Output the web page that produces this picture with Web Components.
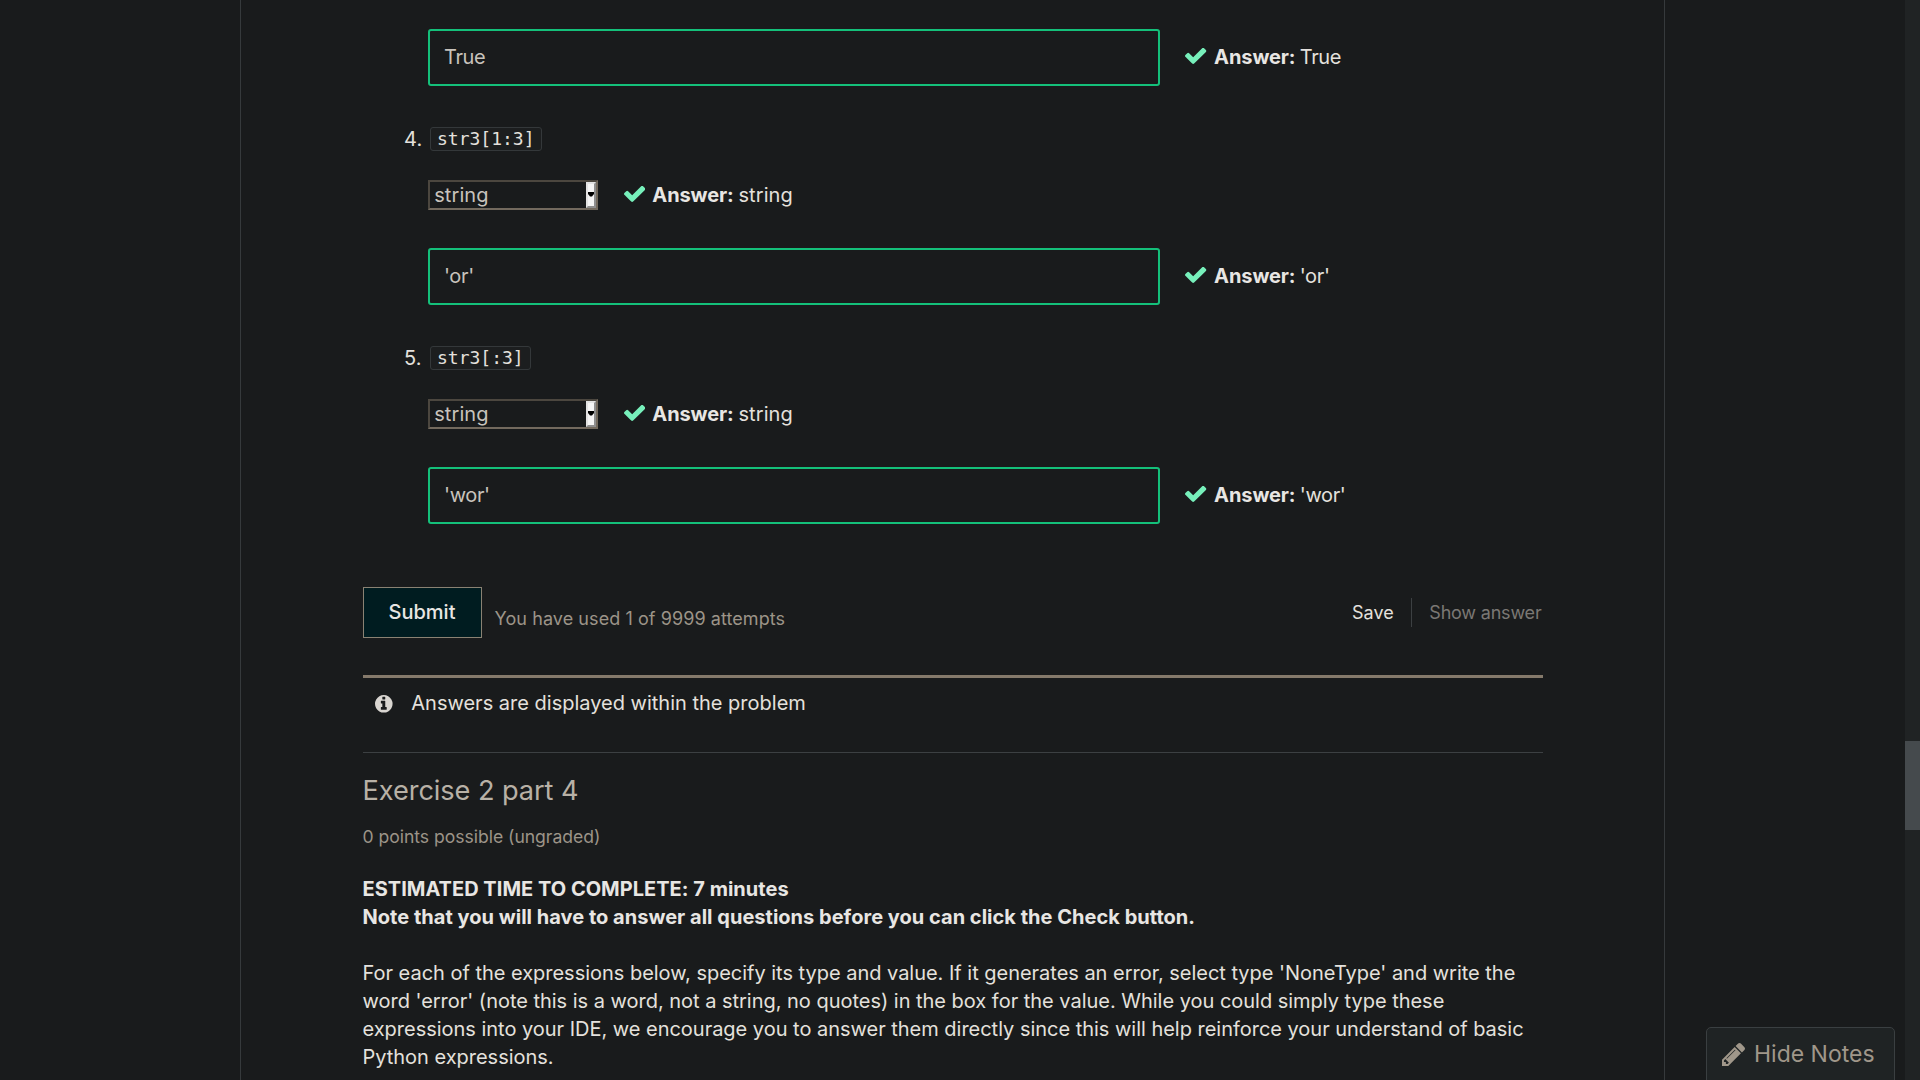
<!DOCTYPE html>
<html lang="en">
<head>
<meta charset="utf-8">
<title>Exercise 2</title>
<style>
  html, body { margin: 0; height: 1080px; overflow: hidden; background: #191b1c; }
  body { font: 400 20px/28px Inter, "Liberation Sans", sans-serif; color: #e4e1dd; }
</style>
</head>
<body>
<course-page></course-page>
<script>
const define = (name, css, html) => customElements.define(name, class extends HTMLElement {
  connectedCallback() {
    if (this.shadowRoot) return;
    const root = this.attachShadow({ mode: 'open' });
    const attr = n => this.getAttribute(n) || '';
    root.innerHTML = `<style>*{box-sizing:border-box}${css}</style>${typeof html === 'function' ? html(attr) : html}`;
  }
});

define('answer-status', `
  :host { display: flex; align-items: baseline; white-space: pre; }
  svg { width: 21.3px; height: 16px; margin-right: 7.5px; fill: #77f0bb; }
  b { font-weight: 700; color: #e8e6e3; letter-spacing: -.1px; word-spacing: 0; }
  span { word-spacing: -1px; }`,
  `<svg viewBox="121 346 1550 1176" preserveAspectRatio="none"><path d="M1671 566q0 40-28 68l-724 724-136 136q-28 28-68 28t-68-28l-136-136-362-362q-28-28-28-68t28-68l136-136q28-28 68-28t68 28l294 295 656-657q28-28 68-28t68 28l136 136q28 28 28 68z"/></svg><span><b>Answer:</b> <slot></slot></span>`);

define('text-answer', `
  :host { display: flex; align-items: baseline; height: 57px; letter-spacing: -.35px; }
  .box { width: 732px; height: 57px; border: 2px solid #14c07a; border-radius: 3px; padding: 12px 14px; color: #c8c3bc; }
  answer-status { margin-left: 25.3px; }`,
  a => `<div class="box">${a('value')}</div><answer-status>${a('value')}</answer-status>`);

define('type-select', `
  :host { display: flex; align-items: baseline; height: 30px; letter-spacing: .1px; }
  .box { display: flex; justify-content: space-between; width: 170px; height: 30px; border: 2px solid; border-color: #4c473f #736a5e #736a5e #4c473f; padding-left: 4.2px; color: #c8c3bc; }
  .label { line-height: 28px; margin-top: -1px; }
  .arrow { display: flex; align-items: center; width: 10px; height: 26px; background: #f5f5f5; border: 2px solid; border-color: #e3e3e3 #8f8f8f #8f8f8f #e3e3e3; }
  svg { display: block; width: 6px; height: 5px; margin-top: -1px; }
  answer-status { margin-left: 25.5px; word-spacing: -1px; }`,
  a => `<div class="box"><span class="label">${a('value')}</span><span class="arrow"><svg viewBox="0 0 6 5"><path d="M0 0h6v2L4 4.6H2L0 2z"/></svg></span></div><answer-status style="margin-right:0">${a('value')}</answer-status>`);

define('code-item', `
  :host { display: flex; align-items: center; height: 28px; margin-left: -24px; }
  .n { width: 26px; letter-spacing: .2px; }
  code { display: block; height: 24px; padding: 0 6px; border: 1px solid #34383a; border-radius: 3px; background: #1c1e1f; font: 18px/22px "DejaVu Sans Mono", monospace; }`,
  a => `<span class="n">${a('number')}.</span><code><slot></slot></code>`);

define('submit-bar', `
  :host { display: flex; align-items: center; height: 51px; font-size: 18px; }
  .submit { width: 119px; height: 51px; border: 1px solid #8a8273; background: #001c20; text-align: center; font-size: 20px; line-height: 49px; font-weight: 500; padding-right: 1px; color: #e8e6e3; }
  .used { margin: 12px auto 0 12.6px; color: #9c9488; letter-spacing: .07px; }
  .show { border-left: 1px solid #3c4042; width: 132px; height: 29px; line-height: 29px; margin-left: 17.3px; padding-left: 17.3px; white-space: nowrap; letter-spacing: -.2px; color: #7b7874; }`,
  `<div class="submit">Submit</div><span class="used">You have used 1 of 9999 attempts</span><span class="save">Save</span><span class="show">Show answer</span>`);

define('info-banner', `
  :host { display: flex; height: 78px; border-top: 3px solid #857a6b; border-bottom: 1px solid #3c4042; padding: 11px 0 0 12px; }
  svg { width: 17.6px; height: 17.6px; margin: 6px 18.7px 0 0; fill: #d9d6d1; }`,
  `<svg viewBox="128 128 1536 1536"><path d="M1152 1376v-160q0-14-9-23t-23-9h-96v-512q0-14-9-23t-23-9h-320q-14 0-23 9t-9 23v160q0 14 9 23t23 9h96v320h-96q-14 0-23 9t-9 23v160q0 14 9 23t23 9h448q14 0 23-9t9-23zm-128-896v-160q0-14-9-23t-23-9h-192q-14 0-23 9t-9 23v160q0 14 9 23t23 9h192q14 0 23-9t9-23zm640 416q0 209-103 385.5t-279.5 279.5-385.5 103-385.5-103-279.5-279.5-103-385.5 103-385.5 279.5-279.5 385.5-103 385.5 103 279.5 279.5 103 385.5z"/></svg><span><slot></slot></span>`);

define('exercise-intro', `
  :host { display: block; }
  h3 { margin: 19px 0 0 -.5px; font-size: 27.2px; line-height: 38px; font-weight: 400; letter-spacing: -.08px; color: #b8b1a6; }
  .points { margin: 15px 0 0 -.5px; font-size: 17.6px; line-height: 24px; letter-spacing: -.04px; color: #9c9488; }
  p { margin: 26px 0 0 -.5px; white-space: nowrap; letter-spacing: -.02px; }
  p + p { margin-top: 28px; }
  b { font-weight: 700; color: #e8e6e3; letter-spacing: .02px; }`,
  `<h3>Exercise 2 part 4</h3><div class="points">0 points possible (ungraded)</div>
   <p><b>ESTIMATED TIME TO COMPLETE: 7 minutes</b><br><b>Note that you will have to answer all questions before you can click the Check button.</b></p>
   <p>For each of the expressions below, specify its type and value. If it generates an error, select type 'NoneType' and write the<br>word 'error' (note this is a word, not a string, no quotes) in the box for the value. While you could simply type these<br>expressions into your IDE, we encourage you to answer them directly since this will help reinforce your understand of basic<br>Python expressions.</p>`);

define('notes-toggle', `
  :host { position: absolute; left: 1706px; top: 1027px; display: flex; width: 189px; height: 60px; border: 1px solid #3a3f41; border-radius: 5px; background: #1f2324; padding: 0 0 0 15px; font-size: 23px; line-height: 32px; color: #a0978a; }
  svg { width: 23px; height: 23px; margin: 15px 9px 0 0; fill: #a0978a; }
  span { margin-top: 10px; }`,
  `<svg viewBox="128 149 1515 1515"><path d="M491 1536l91-91-235-235-91 91v107h128v128h107zm523-928q0-22-22-22-10 0-17 7l-542 542q-7 7-7 17 0 22 22 22 10 0 17-7l542-542q7-7 7-17zm-54-192l416 416-832 832h-416v-416zm683 96q0 53-37 90l-166 166-416-416 166-165q36-38 90-38 53 0 91 38l235 234q37 39 37 91z"/></svg><span>Hide Notes</span>`);

define('scroll-track', `
  :host { display: block; width: 15px; height: 1080px; background: #202324; padding-top: 741px; box-sizing: border-box; }
  div { height: 89px; background: #454a4d; }`, `<div></div>`);

define('course-page', `
  :host { display: flex; height: 1080px; overflow: hidden; }
  main { width: 1425px; height: 1080px; margin-left: 240px; margin-right: 240px; flex: none; border: solid #363a3c; border-width: 0 1px; padding: 29px 121px 0 122px; }
  .answers { margin-left: 65px; }
  code-item { margin-top: 39px; }
  type-select { margin-top: 27px; }
  type-select + text-answer { margin-top: 38px; }
  submit-bar { margin-top: 63px; }
  info-banner { margin-top: 37px; box-sizing: border-box; }
  notes-toggle { box-sizing: border-box; }`,
  `<main>
    <div class="answers">
      <text-answer value="True"></text-answer>
      <code-item number="4">str3[1:3]</code-item>
      <type-select value="string"></type-select>
      <text-answer value="'or'"></text-answer>
      <code-item number="5">str3[:3]</code-item>
      <type-select value="string"></type-select>
      <text-answer value="'wor'"></text-answer>
    </div>
    <submit-bar></submit-bar>
    <info-banner>Answers are displayed within the problem</info-banner>
    <exercise-intro></exercise-intro>
  </main>
  <scroll-track></scroll-track>
  <notes-toggle></notes-toggle>`);
</script>
</body>
</html>
